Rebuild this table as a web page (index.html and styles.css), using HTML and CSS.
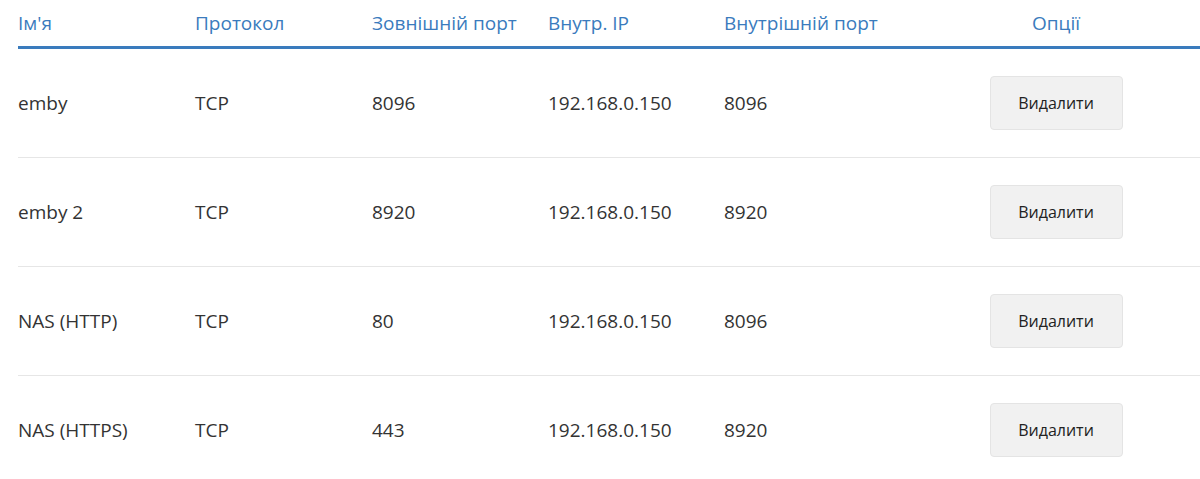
FILE: index.html
```html
<!DOCTYPE html>
<html lang="uk">
<head>
<meta charset="utf-8">
<link rel="stylesheet" href="styles.css">
</head>
<body>
<div class="wrap">
<table class="ports">
  <colgroup>
    <col class="c1"><col class="c2"><col class="c3"><col class="c4"><col class="c5"><col class="c6">
  </colgroup>
  <thead>
    <tr>
      <th>Ім'я</th>
      <th>Протокол</th>
      <th>Зовнішній порт</th>
      <th>Внутр. IP</th>
      <th>Внутрішній порт</th>
      <th class="opt">Опції</th>
    </tr>
  </thead>
  <tbody>
    <tr>
      <td>emby</td><td>TCP</td><td>8096</td><td>192.168.0.150</td><td>8096</td>
      <td class="opt"><button class="btn">Видалити</button></td>
    </tr>
    <tr>
      <td>emby 2</td><td>TCP</td><td>8920</td><td>192.168.0.150</td><td>8920</td>
      <td class="opt"><button class="btn">Видалити</button></td>
    </tr>
    <tr>
      <td>NAS (HTTP)</td><td>TCP</td><td>80</td><td>192.168.0.150</td><td>8096</td>
      <td class="opt"><button class="btn">Видалити</button></td>
    </tr>
    <tr>
      <td>NAS (HTTPS)</td><td>TCP</td><td>443</td><td>192.168.0.150</td><td>8920</td>
      <td class="opt"><button class="btn">Видалити</button></td>
    </tr>
  </tbody>
</table>
</div>
</body>
</html>
```

FILE: styles.css
```css
html, body {
  margin: 0;
  padding: 0;
  background: #ffffff;
  overflow: hidden;
}

body {
  font-family: "Open Sans", "Noto Sans", sans-serif;
  color: #333333;
}

.wrap {
  padding-left: 18px;
}

.ports {
  border-collapse: collapse;
  table-layout: fixed;
  width: 1194px;
}

.c1, .c2 { width: 177px; }
.c3, .c4, .c5 { width: 176px; }

.ports th {
  height: 47px;
  padding: 0;
  text-align: left;
  vertical-align: middle;
  font-weight: 400;
  font-size: 19px;
  color: #3a7bbd;
  border-bottom: 3px solid #3a7bbd;
  box-sizing: border-box;
}

.ports th.opt {
  text-align: center;
}

.ports td {
  height: 108px;
  padding: 0;
  font-size: 19px;
  color: #333333;
  vertical-align: middle;
  border-top: 1px solid #e6e6e6;
}

.ports tbody tr:first-child td {
  border-top: none;
}

.ports td.opt {
  text-align: center;
}

.btn {
  width: 133px;
  height: 54px;
  background: #f1f1f1;
  border: 1px solid #e4e4e4;
  border-radius: 4px;
  font-family: "Open Sans", "Noto Sans", sans-serif;
  font-size: 16px;
  color: #222222;
  padding: 0;
}
```
